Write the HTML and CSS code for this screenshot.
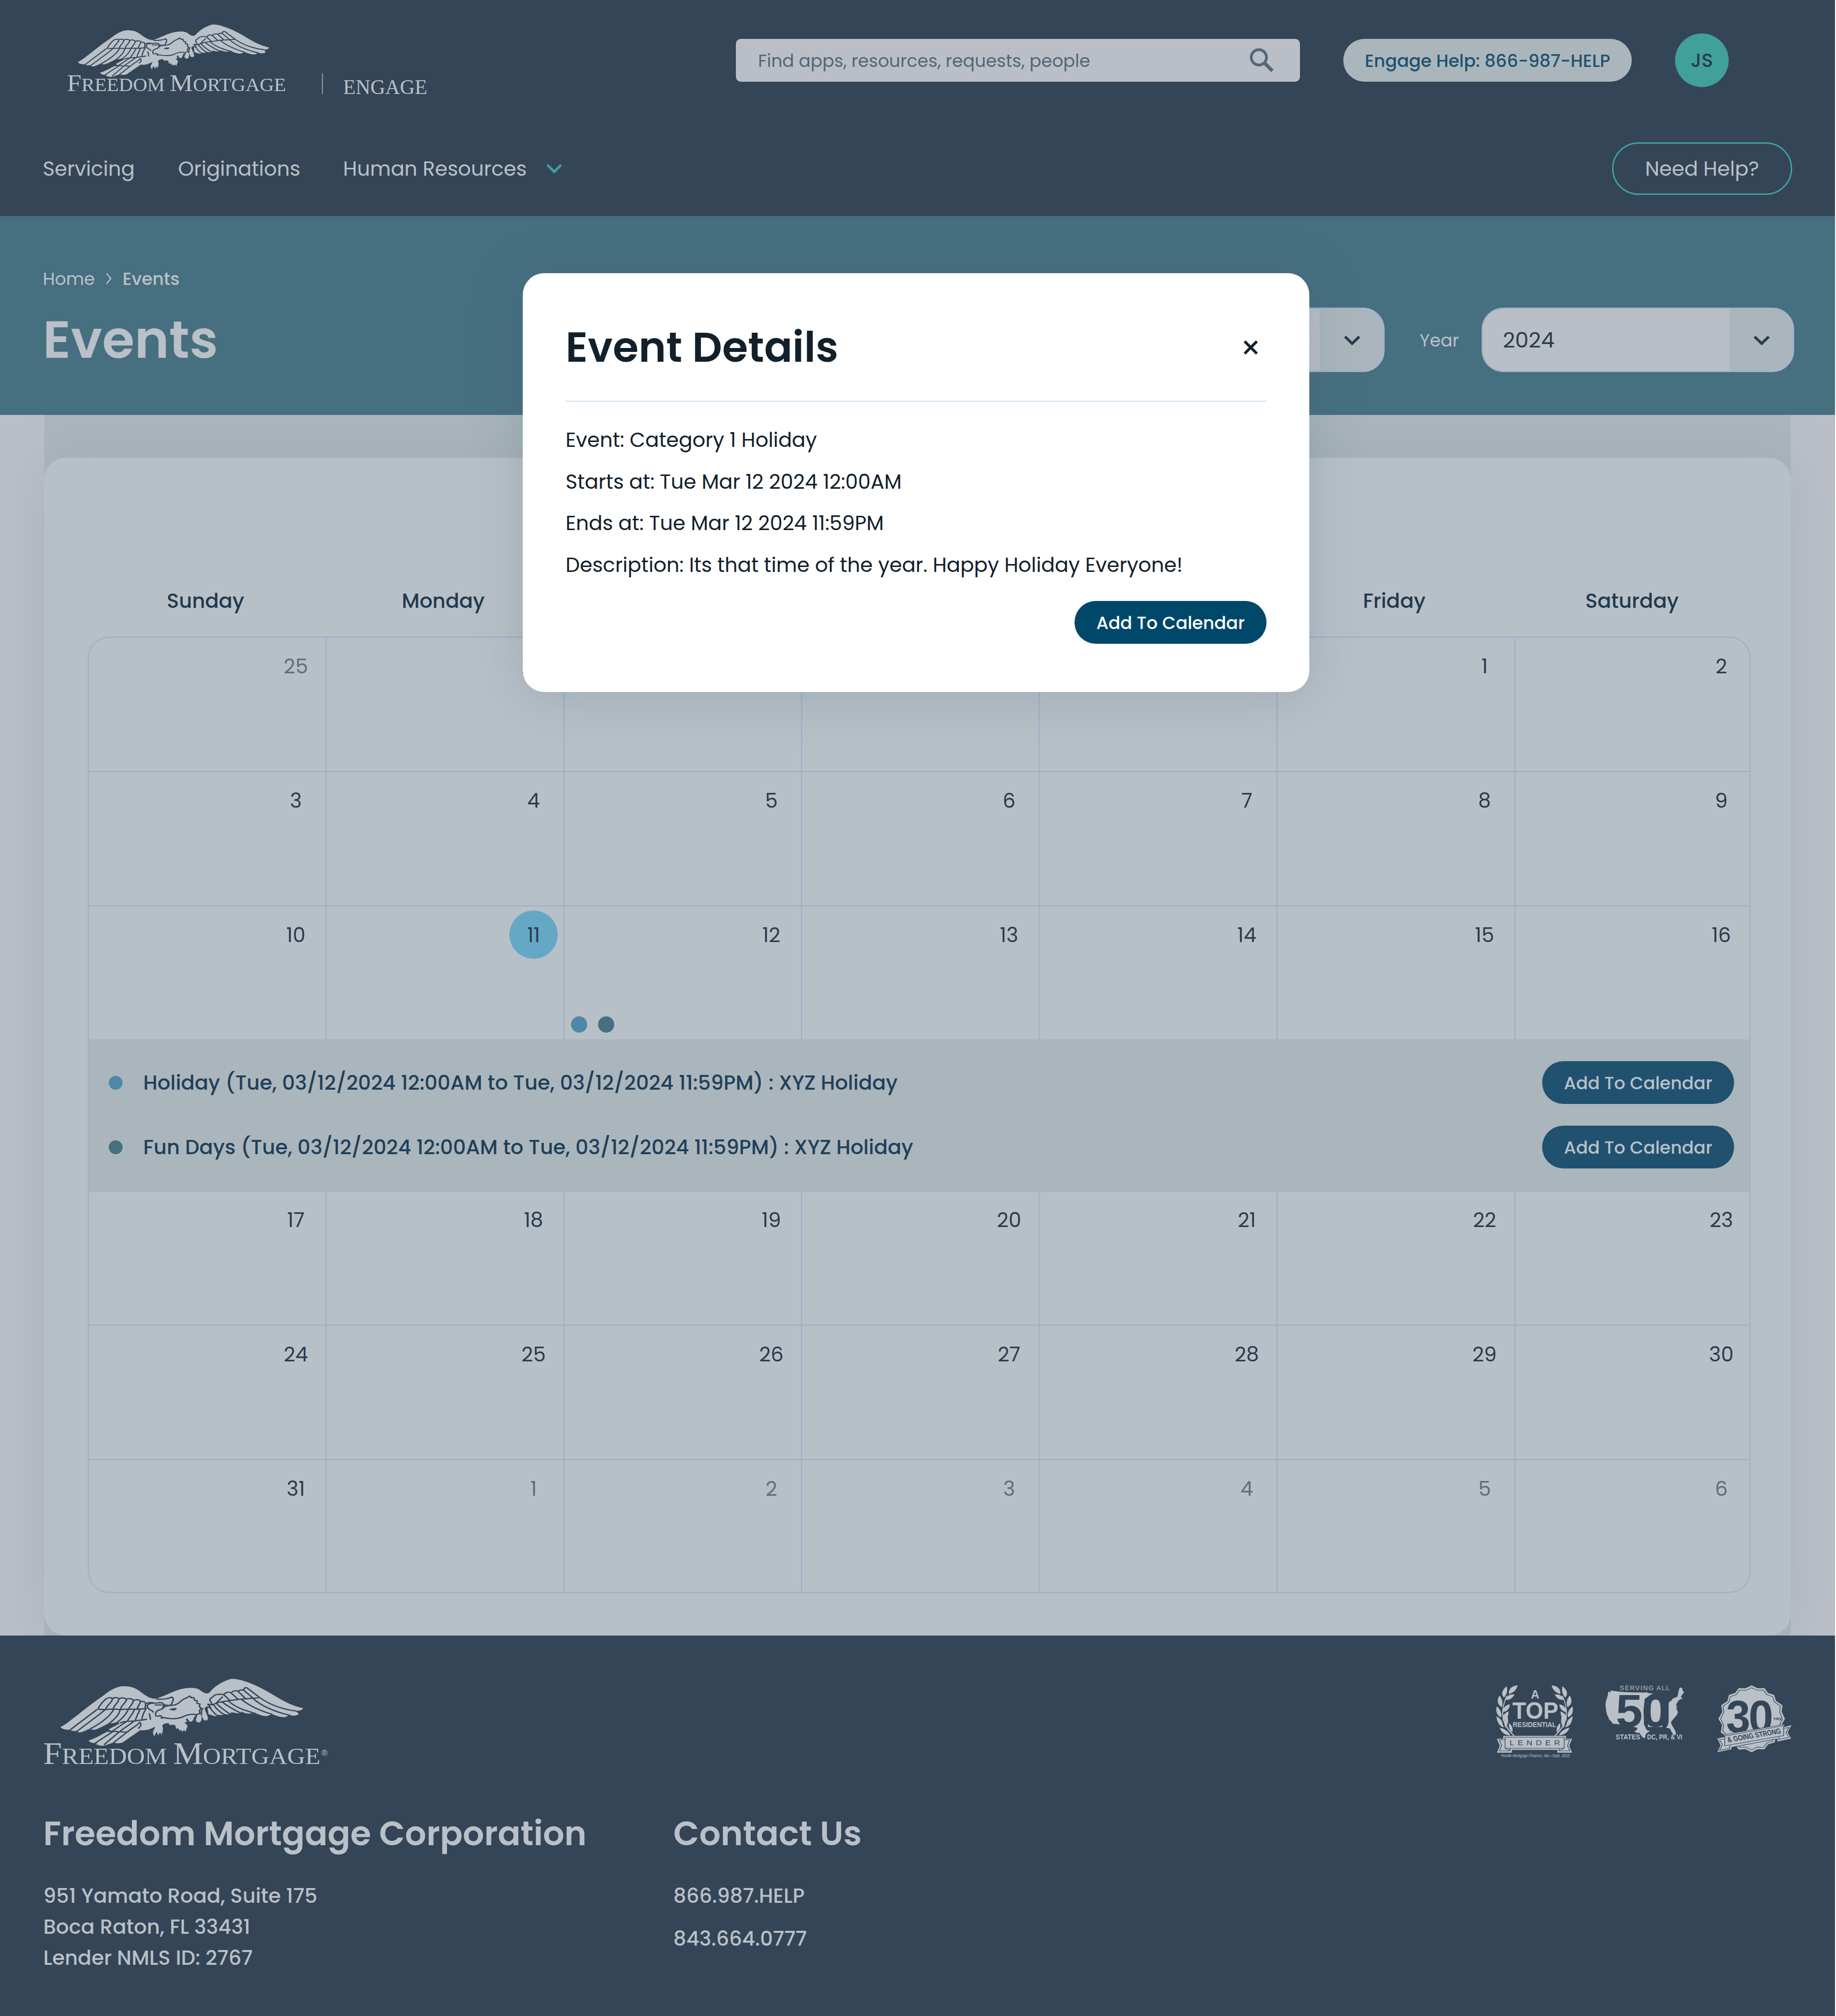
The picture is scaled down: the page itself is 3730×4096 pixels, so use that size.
FILE: index.html
```html
<!DOCTYPE html>
<html lang="en">
<head>
    <meta charset="UTF-8">
    <meta name="viewport" content="width=device-width, initial-scale=1.0">
    <title>Events | Freedom Mortgage Engage</title>
    <link rel="stylesheet" href="styles.css">
</head>
<body>
    <!-- Shared eagle mark -->
    <svg class="sprite" aria-hidden="true">
        <symbol id="eagle" viewBox="142 548 1104 362" preserveAspectRatio="none">
            <path fill="#b9c0c7" d="M142 807C170 795 260 700 340 637C385 595 410 590 435 590C480 592 495 610 520 632C545 652 560 658 578 656C620 640 650 618 690 605C720 597 750 595 768 605C780 612 790 625 805 628C815 629 822 622 828 612C850 585 880 565 910 553C925 548 945 551 970 560C1030 580 1080 615 1130 650C1165 675 1200 695 1245 707C1243 718 1230 722 1212 721L1226 738C1215 749 1200 749 1183 743L1168 753C1150 758 1130 750 1103 738L1088 747C1070 753 1050 744 1028 733L1008 735C995 738 975 732 964 725L962 734C950 737 935 732 918 728L916 737C905 742 895 740 885 736L890 740C880 745 870 744 858 742L856 749C845 752 832 745 812 737L810 700L796 706C803 730 812 750 813 762C811 774 800 778 791 766L783 742C785 765 783 778 775 783C766 784 758 778 757 769L765 742L752 750L744 772C738 782 730 780 727 775L718 762L716 780L704 786C722 792 722 808 714 818L711 833L703 822L697 833L690 822L683 828L680 816L666 815C668 805 664 795 655 795L640 797L630 790L618 792L604 800C612 815 604 825 608 838L602 835L604 852L594 836L586 853L580 832L568 856L563 842C560 828 572 818 572 806C550 820 530 828 505 824L425 889C415 895 395 895 383 890L350 903C335 910 318 907 303 898L310 890L298 893C285 893 275 888 269 879C300 870 330 845 360 830L382 828C372 828 364 826 362 819C385 805 400 795 412 788L398 780C385 786 372 790 362 787C340 800 310 820 296 822C287 822 278 820 274 817C265 820 245 836 228 836C220 835 217 832 218 828C208 829 190 829 184 822C170 822 148 820 142 807Z"/>
            <g fill="none" stroke="#344557" stroke-width="6.5" stroke-linejoin="round">
                <path d="M312 712C320 690 340 665 350 657C362 647 378 650 378 658C385 648 400 648 408 657C415 650 435 650 442 660C450 652 468 655 474 666C485 660 502 660 506 672C515 668 525 672 530 682C545 676 560 676 566 680"/>
                <path d="M310 712C340 718 370 708 410 714C450 710 500 716 535 708"/>
                <path d="M378 658C375 680 352 690 348 711M408 657C405 680 385 690 382 710M442 660C440 680 418 690 415 712M474 666C470 690 455 695 452 712M506 672C500 690 492 700 490 712M530 682L526 708"/>
                <path d="M308 714L184 824M345 715C310 750 250 800 217 830M384 713C370 745 330 785 276 818M413 714C412 740 380 775 362 790M450 714C440 740 420 765 400 782M478 714C470 740 452 760 446 776M503 712C496 735 488 750 482 772M530 712C520 730 515 745 512 766"/>
                <path d="M412 786C430 775 450 778 480 775C500 770 515 772 535 765M440 780L378 829M475 778L412 830M500 785C490 800 470 810 445 834M358 829C370 836 395 826 405 834C420 828 440 840 450 832M378 833L300 893M408 834L340 902M445 834L382 892M500 780C515 795 505 805 495 815"/>
                <path d="M566 680C540 680 530 695 540 705C545 720 560 715 565 730M566 680C580 682 600 672 608 682C616 690 610 700 606 708M545 735C550 745 548 760 552 768M570 690C590 690 600 690 606 690"/>
                <path d="M578 658C605 662 635 655 648 648C662 655 650 675 645 690C635 695 620 690 610 688"/>
                <path d="M578 752C565 725 590 715 604 712C615 690 640 695 660 690C675 688 685 672 700 660C715 652 722 650 730 642L738 652L748 650L752 665L764 668L762 680L776 685L774 700L782 706L774 720L776 735L760 742C735 735 715 742 695 755C665 768 635 762 612 757L600 760C608 750 595 742 582 752"/>
                <path d="M790 706C785 712 782 725 783 745M812 735L806 700L825 705L812 685L832 690"/>
                <path d="M832 690C830 675 815 665 824 655C835 650 840 632 855 634C865 632 880 632 885 636C890 622 910 618 918 626C925 612 945 612 950 618C955 608 972 608 976 612C974 598 985 595 992 600L1050 652"/>
                <path d="M832 690C860 670 900 670 950 660C990 655 1020 655 1050 650M885 636L915 668M918 626L950 660M950 618L985 657M976 612L1018 654M850 680L880 645"/>
                <path d="M1050 652C1090 685 1150 715 1215 722M1018 655C1050 690 1110 725 1186 745M965 660C1000 695 1050 720 1105 740M905 668C940 705 980 718 1030 736M875 672C900 695 930 715 966 736M850 680C870 705 895 725 918 742M838 688C850 712 870 730 892 746M820 700C830 720 842 735 858 750"/>
            </g>
            <path fill="#344557" d="M635 716C645 706 660 706 670 708C670 715 664 719 655 719C648 717 642 718 635 716ZM612 790L632 786L640 797L624 800L630 815L618 808L604 802ZM712 765L722 762L722 778L716 776Z"/>
        </symbol>
    </svg>

    <!-- Header -->
    <header class="header">
        <div class="header-top">
            <svg class="logo" width="446" height="144" viewBox="0 0 446 144">
                <use href="#eagle" x="22" y="0" width="389" height="108"/>
                <text class="logo-text" y="136" textLength="445" lengthAdjust="spacingAndGlyphs"><tspan font-size="49">F</tspan>REEDOM <tspan font-size="49">M</tspan>ORTGAGE</text>
            </svg>
            <span class="logo-divider"></span>
            <svg class="product" width="172" height="44" viewBox="0 0 172 44">
                <text class="product-text" y="36" textLength="171" lengthAdjust="spacingAndGlyphs">ENGAGE</text>
            </svg>
            <div class="search">
                <span class="search-text">Find apps, resources, requests, people</span>
                <svg width="50" height="50" viewBox="0 0 50 50" fill="none" stroke="#536675">
                    <circle cx="18.5" cy="18.5" r="15.5" stroke-width="5.5"/>
                    <path d="M30 30L46 46" stroke-width="7"/>
                </svg>
            </div>
            <a class="help-pill">Engage Help: 866-987-HELP</a>
            <span class="avatar">JS</span>
        </div>
        <nav class="nav">
            <a class="nav-servicing">Servicing</a>
            <a class="nav-orig">Originations</a>
            <a class="nav-hr">Human Resources</a>
            <svg width="34" height="22" viewBox="0 0 34 22" fill="none" stroke="#41a09c" stroke-width="5"><path d="M3 3L17 17L31 3"/></svg>
            <a class="need-help">Need Help?</a>
        </nav>
    </header>

    <!-- Page title -->
    <section class="banner">
        <div class="banner-left">
            <div class="breadcrumb">
                <span class="crumb-home">Home</span>
                <svg width="12" height="24" viewBox="0 0 12 24" fill="none" stroke="#b9c0c7" stroke-width="2.5"><path d="M1.5 1.5L10 12L1.5 22.5"/></svg>
                <span class="crumb-current">Events</span>
            </div>
            <h1>Events</h1>
        </div>
        <div class="filters">
            <div class="select">
                <span class="select-value"></span>
                <span class="select-arrow"><svg width="34" height="22" viewBox="0 0 34 22" fill="none" stroke="#2a3c4b" stroke-width="5.5"><path d="M2.5 3L17 17L31.5 3"/></svg></span>
            </div>
            <span class="filter-label">Year</span>
            <div class="select">
                <span class="select-value">2024</span>
                <span class="select-arrow"><svg width="34" height="22" viewBox="0 0 34 22" fill="none" stroke="#2a3c4b" stroke-width="5.5"><path d="M2.5 3L17 17L31.5 3"/></svg></span>
            </div>
        </div>
    </section>

    <!-- Calendar -->
    <main class="content">
        <div class="panel">
            <div class="card">
                <div class="weekdays">
                    <span>Sunday</span>
                    <span>Monday</span>
                    <span></span>
                    <span></span>
                    <span></span>
                    <span>Friday</span>
                    <span>Saturday</span>
                </div>
                <div class="calendar">
                    <div class="day muted"><span>25</span></div>
                    <div class="day muted"><span>26</span></div>
                    <div class="day"></div>
                    <div class="day"></div>
                    <div class="day"></div>
                    <div class="day"><span>1</span></div>
                    <div class="day"><span>2</span></div>

                    <div class="day"><span>3</span></div>
                    <div class="day"><span>4</span></div>
                    <div class="day"><span>5</span></div>
                    <div class="day"><span>6</span></div>
                    <div class="day"><span>7</span></div>
                    <div class="day"><span>8</span></div>
                    <div class="day"><span>9</span></div>

                    <div class="day"><span>10</span></div>
                    <div class="day"><span class="today">11</span></div>
                    <div class="day">
                        <span>12</span>
                        <div class="dots"><i class="dot holiday"></i><i class="dot fun"></i></div>
                    </div>
                    <div class="day"><span>13</span></div>
                    <div class="day"><span>14</span></div>
                    <div class="day"><span>15</span></div>
                    <div class="day"><span>16</span></div>

                    <div class="events">
                        <div class="event">
                            <i class="bullet holiday"></i>
                            <p>Holiday (Tue, 03/12/2024 12:00AM to Tue, 03/12/2024 11:59PM) : XYZ Holiday</p>
                            <button class="btn">Add To Calendar</button>
                        </div>
                        <div class="event">
                            <i class="bullet fun"></i>
                            <p>Fun Days (Tue, 03/12/2024 12:00AM to Tue, 03/12/2024 11:59PM) : XYZ Holiday</p>
                            <button class="btn">Add To Calendar</button>
                        </div>
                    </div>

                    <div class="day"><span>17</span></div>
                    <div class="day"><span>18</span></div>
                    <div class="day"><span>19</span></div>
                    <div class="day"><span>20</span></div>
                    <div class="day"><span>21</span></div>
                    <div class="day"><span>22</span></div>
                    <div class="day"><span>23</span></div>

                    <div class="day"><span>24</span></div>
                    <div class="day"><span>25</span></div>
                    <div class="day"><span>26</span></div>
                    <div class="day"><span>27</span></div>
                    <div class="day"><span>28</span></div>
                    <div class="day"><span>29</span></div>
                    <div class="day"><span>30</span></div>

                    <div class="day last"><span>31</span></div>
                    <div class="day last muted"><span>1</span></div>
                    <div class="day last muted"><span>2</span></div>
                    <div class="day last muted"><span>3</span></div>
                    <div class="day last muted"><span>4</span></div>
                    <div class="day last muted"><span>5</span></div>
                    <div class="day last muted"><span>6</span></div>
                </div>
            </div>
        </div>
    </main>

    <!-- Footer -->
    <footer class="footer">
        <div class="footer-top">
            <svg width="582" height="180" viewBox="0 0 582 180">
                <use href="#eagle" x="35" y="0" width="493" height="138"/>
                <text class="logo-text footer-logo" y="174" textLength="563" lengthAdjust="spacingAndGlyphs"><tspan font-size="63">F</tspan>REEDOM <tspan font-size="63">M</tspan>ORTGAGE</text>
                <text class="reg" x="565" y="157">®</text>
            </svg>
            <div class="badges">
                <!-- Top lender -->
                <svg width="158.5" height="148.7" viewBox="85 128 355 446" preserveAspectRatio="none" fill="#b9c0c7">
                    <g id="branch">
                        <path d="M168 440C125 385 95 320 135 195L139 196C100 315 130 380 173 438Z"/>
                        <path d="M186 132C165 133 143 150 147 185C170 175 183 155 186 132Z"/>
                        <path d="M137 138C118 155 108 185 124 206C140 185 140 160 137 138Z"/>
                        <path d="M172 187C152 183 134 195 132 220C152 222 166 205 172 187Z"/>
                        <path d="M104 194C90 220 94 250 114 264C122 240 116 212 104 194Z"/>
                        <path d="M151 248C132 250 118 270 119 295C140 290 150 270 151 248Z"/>
                        <path d="M91 260C86 290 92 318 112 326C116 300 106 275 91 260Z"/>
                        <path d="M145 290C126 300 114 320 119 348C137 340 147 315 145 290Z"/>
                        <path d="M90 320C92 350 100 372 118 380C121 355 108 332 90 320Z"/>
                        <path d="M140 318C124 340 122 365 131 390C144 370 145 345 140 318Z"/>
                        <path d="M94 345C98 370 112 385 124 388C118 365 110 352 94 345Z"/>
                        <path d="M147 362C144 385 150 405 162 418C166 395 160 375 147 362Z"/>
                        <path d="M105 390C112 420 130 435 153 436C145 412 125 395 105 390Z"/>
                    </g>
                    <use href="#branch" transform="translate(527 0) scale(-1 1)"/>
                    <path d="M92 457H121V439H406V457H434L421 500L434 542H367V525H160V542H92L105 500Z"/>
                    <g fill="none" stroke="#344557" stroke-width="3">
                        <rect x="129" y="448" width="269" height="67"/>
                        <path d="M129 463H103L114 500L103 531H152V515M129 515L152 529M398 463H424L413 500L424 531H375V515M398 515L375 529"/>
                    </g>
                    <g font-weight="700">
                        <text x="247" y="213" font-size="73" textLength="38" lengthAdjust="spacingAndGlyphs">A</text>
                        <text x="162" y="335" font-size="145" textLength="209" lengthAdjust="spacingAndGlyphs">TOP</text>
                        <text x="164" y="386" font-size="46" textLength="198" lengthAdjust="spacingAndGlyphs">RESIDENTIAL</text>
                    </g>
                    <text x="150" y="497" font-size="46" letter-spacing="20" textLength="245" lengthAdjust="spacingAndGlyphs" fill="#344557">LENDER</text>
                    <text x="109" y="569" font-size="25" textLength="314" lengthAdjust="spacingAndGlyphs"><tspan font-style="italic">*Inside Mortgage Finance,</tspan> Jan.–Sept. 2023</text>
                </svg>
                <!-- 50 states -->
                <svg width="163" height="113.3" viewBox="583 128 365 340" preserveAspectRatio="none" fill="#b9c0c7">
                    <path d="M599 168L607 176L611 163C660 174 720 176 772 175L774 171L778 178L805 182L790 190L765 215L760 290L762 370L775 405L791 411C775 418 765 430 768 453C752 455 748 430 740 420L728 421L718 410C730 408 732 400 730 390L680 372L640 368L620 366C612 345 600 340 600 325C592 310 590 290 588 265C582 230 600 205 599 168Z"/>
                    <path d="M780 215L845 215V385H780Z"/>
                    <path d="M926 144L936 150L938 166L945 170C940 185 930 195 930 203L938 213C922 215 915 230 908 250L915 275L905 262L917 295C910 320 895 335 885 355C885 375 905 400 907 420C908 435 904 438 899 433C888 425 885 405 880 395L862 390C872 375 874 360 874 340V236L888 223C888 212 900 208 912 203C920 190 916 160 926 144Z"/>
                    <g fill="#344557" font-weight="700">
                        <text x="634" y="383" font-size="278" textLength="122" lengthAdjust="spacingAndGlyphs">5</text>
                        <text x="752" y="383" font-size="278" textLength="126" lengthAdjust="spacingAndGlyphs">0</text>
                    </g>
                    <text x="652" y="162" font-size="41" letter-spacing="5" textLength="230" lengthAdjust="spacingAndGlyphs">SERVING ALL</text>
                    <g font-weight="700" font-size="46">
                        <text x="633" y="462" textLength="112" lengthAdjust="spacingAndGlyphs">STATES</text>
                        <text x="776" y="462" textLength="160" lengthAdjust="spacingAndGlyphs">DC, PR, &amp; VI</text>
                    </g>
                </svg>
                <!-- 30 years -->
                <svg width="154" height="138.3" viewBox="1090 130 345 415" preserveAspectRatio="none" fill="#b9c0c7">
                    <path d="M1250 134L1278 152L1309 150L1325 180L1353 192L1361 228L1391 255L1387 295L1402 337L1386 375L1388 420L1362 450L1355 480L1325 494L1308 524L1278 522L1250 542L1222 522L1192 525L1175 494L1146 480L1140 448L1110 420L1116 375L1099 337L1117 295L1112 255L1140 230L1147 192L1175 180L1192 150L1222 152Z"/>
                    <path fill="none" stroke="#344557" stroke-width="3" d="M1250 148L1276 164L1304 162L1319 190L1346 202L1354 235L1381 260L1378 298L1391 337L1377 378L1380 412L1354 445L1347 472L1319 486L1304 512L1276 510L1250 528L1224 510L1196 512L1181 486L1153 472L1146 445L1119 412L1123 378L1109 337L1124 298L1121 260L1147 236L1154 202L1181 190L1196 162L1224 164Z"/>
                    <g fill="#344557" font-weight="700">
                        <text x="1134" y="421" font-size="278" textLength="110" lengthAdjust="spacingAndGlyphs">3</text>
                        <text x="1237" y="421" font-size="278" textLength="112" lengthAdjust="spacingAndGlyphs">0</text>
                        <text x="1349" y="345" font-size="24" textLength="38" lengthAdjust="spacingAndGlyphs">YRS</text>
                    </g>
                    <path stroke="#344557" stroke-width="3" d="M1092 457L1125 448V434L1400 371V386L1434 374L1416 420L1432 459L1366 478V460L1160 511V524L1092 543L1108 498Z"/>
                    <path fill="none" stroke="#344557" stroke-width="3" d="M1128 442L1396 380V440L1128 502ZM1128 460L1104 466L1118 496L1104 530L1150 518V500M1396 396L1421 390L1406 422L1421 450L1374 463V448"/>
                    <text transform="translate(1143 482) rotate(-13)" font-size="46" font-weight="700" fill="#344557" textLength="250" lengthAdjust="spacingAndGlyphs">&amp; GOING STRONG</text>
                </svg>
            </div>
        </div>
        <div class="footer-cols">
            <div class="company">
                <h2>Freedom Mortgage Corporation</h2>
                <p>951 Yamato Road, Suite 175</p>
                <p>Boca Raton, FL 33431</p>
                <p>Lender NMLS ID: 2767</p>
            </div>
            <div class="contact">
                <h2>Contact Us</h2>
                <p>866.987.HELP</p>
                <p>843.664.0777</p>
            </div>
        </div>
    </footer>

    <!-- Event details modal -->
    <div class="modal">
        <div class="modal-header">
            <h2>Event Details</h2>
            <svg width="30" height="30" viewBox="0 0 30 30" stroke="#12202b" stroke-width="5.5"><path d="M2.5 2.5L27.5 27.5M27.5 2.5L2.5 27.5"/></svg>
        </div>
        <div class="modal-body">
            <p>Event: Category 1 Holiday</p>
            <p>Starts at: Tue Mar 12 2024 12:00AM</p>
            <p>Ends at: Tue Mar 12 2024 11:59PM</p>
            <p>Description: Its that time of the year. Happy Holiday Everyone!</p>
        </div>
        <button class="btn btn-primary">Add To Calendar</button>
    </div>
</body>
</html>
```
FILE: styles.css
```css
* {
    box-sizing: border-box;
}
body {
    font-family: 'Poppins', 'Inter', sans-serif;
    margin: 0;
    padding: 0;
    width: 3728px;
    color: #b9c0c7;
    background-color: #ffffff;
    position: relative;
}
h1, h2, p {
    margin: 0;
}
svg {
    display: block;
    flex: none;
    overflow: visible;
}
svg text {
    font-family: 'Liberation Sans', Arial, sans-serif;
}
.sprite {
    position: absolute;
    width: 0;
    height: 0;
}
/* Header */
.header {
    height: 439px;
    background: #344557;
}
.header-top {
    display: flex;
    align-items: flex-start;
    height: 246px;
    padding-left: 136px;
}
.logo {
    margin-top: 49px;
}
svg .logo-text {
    font-family: 'Liberation Serif', serif;
    font-size: 37px;
    fill: #b9c0c7;
}
svg .footer-logo {
    font-size: 47px;
}
svg .reg {
    font-size: 17px;
    fill: #b9c0c7;
}
.logo-divider {
    width: 2px;
    height: 42px;
    margin: 149px 0 0 72px;
    background: #8f9aa5;
}
.product {
    margin: 155px 0 0 41px;
}
svg .product-text {
    font-family: 'Liberation Serif', serif;
    font-size: 43px;
    fill: #b9c0c7;
}
.search {
    display: flex;
    align-items: center;
    justify-content: space-between;
    width: 1146px;
    height: 87px;
    margin: 79px 0 0 626px;
    padding: 0 52px 0 45px;
    border-radius: 10px;
    background: #babfc7;
    color: #536675;
}
.search-text {
    padding-top: 2px;
    font-size: 35.5px;
}
.help-pill {
    width: 586px;
    height: 87px;
    margin: 79px 0 0 88px;
    border-radius: 44px;
    background: #abb6bc;
    color: #20526f;
    font-size: 35.5px;
    font-weight: 500;
    line-height: 90px;
    text-align: center;
    white-space: nowrap;
}
.avatar {
    width: 109px;
    height: 109px;
    margin: 68px 0 0 88px;
    border-radius: 50%;
    background: #41a09c;
    color: #2a3c4b;
    font-size: 39px;
    font-weight: 500;
    line-height: 109px;
    text-align: center;
}
.nav {
    display: flex;
    align-items: center;
    height: 193px;
    padding: 0 87px 0 87px;
    font-size: 41px;
}
.nav-orig {
    margin-left: 88px;
}
.nav-hr {
    margin-left: 87px;
}
.nav svg {
    margin-left: 39px;
}
.need-help {
    width: 366px;
    height: 107px;
    margin-left: auto;
    border: 3px solid #41a09c;
    border-radius: 54px;
    line-height: 102px;
    text-align: center;
}
/* Banner */
.banner {
    display: flex;
    justify-content: space-between;
    height: 404px;
    padding: 0 83px 0 87px;
    background: #466f80;
}
.breadcrumb {
    display: flex;
    align-items: center;
    height: 40px;
    margin-top: 107px;
    font-size: 35.5px;
}
.breadcrumb svg {
    margin: 0 22px;
}
.crumb-current {
    font-weight: 500;
}
.banner h1 {
    margin-top: 41px;
    font-size: 106.5px;
    font-weight: 600;
    line-height: 126px;
}
.filters {
    display: flex;
    align-items: center;
    height: 131px;
    margin-top: 186px;
}
.filter-label {
    width: 197px;
    padding: 2px 0 0 71px;
    font-size: 35.5px;
}
.select {
    display: flex;
    width: 635px;
    height: 131px;
    border: 3px solid #a2b3c8;
    border-radius: 44px;
    background: #babfc7;
    overflow: hidden;
}
.select-value {
    flex: 1;
    padding-left: 40px;
    color: #2a3c4b;
    font-size: 43.7px;
    line-height: 126px;
}
.select-arrow {
    display: flex;
    align-items: center;
    justify-content: center;
    width: 129px;
    padding: 2px 0 0 3px;
    background: #abb6bc;
}
/* Calendar */
.content {
    height: 2480px;
    padding: 0 90px;
    background: #babfc7;
    overflow: hidden;
}
.panel {
    height: 2480px;
    padding-top: 87px;
    background: #abb6bc;
}
.card {
    height: 2393px;
    padding: 260px 81px 0 88px;
    border-radius: 44px;
    background: #b8c0c7;
    box-shadow: 0 0 110px rgba(120, 135, 155, 0.24);
}
.weekdays {
    display: grid;
    grid-template-columns: repeat(7, 483px);
    height: 103px;
    margin: 0 -8px 0 -2px;
    color: #223a4d;
    font-size: 41px;
    font-weight: 500;
    line-height: 62px;
    text-align: center;
}
.calendar {
    display: grid;
    grid-template-columns: repeat(6, 483px) 1fr;
    grid-template-rows: repeat(3, 273px) 306px repeat(2, 273px) 267px;
    border: 3px solid #a2b3c8;
    border-radius: 44px;
    overflow: hidden;
}
.day {
    display: flex;
    flex-direction: column;
    justify-content: space-between;
    padding: 8px 11px 14px;
    border-right: 3px solid #a2b3c8;
    border-bottom: 3px solid #a2b3c8;
    color: #2a3c4b;
    font-size: 41px;
}
.day > span {
    align-self: flex-end;
    width: 98px;
    height: 98px;
    border-radius: 50%;
    line-height: 99px;
    text-align: center;
}
.day:nth-child(7), .day:nth-child(14), .day:nth-child(21),
.day:nth-child(29), .day:nth-child(36), .day:nth-child(43) {
    padding-right: 8px;
    border-right: none;
}
.day.last {
    border-bottom: none;
}
.day.muted {
    color: #5f6f7d;
}
.day .today {
    background: #64a8c6;
}
.dots {
    display: flex;
    gap: 22px;
    padding-left: 2px;
}
.dot {
    width: 33px;
    height: 33px;
    border-radius: 50%;
}
.holiday {
    background: #4e87a8;
}
.fun {
    background: #466f80;
}
.events {
    grid-column: 1 / -1;
    padding: 41px 31px 0 40px;
    border-bottom: 3px solid #a2b3c8;
    background: #abb6bc;
}
.event {
    display: flex;
    align-items: center;
    height: 87px;
    margin-bottom: 44px;
    color: #20405a;
}
.bullet {
    width: 28px;
    height: 28px;
    margin-right: 42px;
    border-radius: 50%;
}
.event p {
    font-size: 41px;
    font-weight: 500;
    white-space: nowrap;
}
.btn {
    width: 390px;
    height: 87px;
    margin-left: auto;
    padding: 2px 0 0;
    border: none;
    border-radius: 44px;
    background: #20526f;
    color: #b9c0c7;
    font-family: inherit;
    font-size: 35.5px;
    font-weight: 500;
    cursor: pointer;
}
/* Footer */
.footer {
    height: 773px;
    padding: 87px 87px 0 88px;
    background: #344557;
}
.footer-top {
    display: flex;
    justify-content: space-between;
}
.badges {
    display: flex;
    gap: 63.6px;
    padding-top: 13px;
}
.footer-cols {
    display: flex;
    padding-top: 75px;
}
.company {
    width: 1280px;
}
.footer h2 {
    height: 155px;
    font-size: 68.3px;
    font-weight: 600;
    line-height: 120px;
    white-space: nowrap;
}
.footer p {
    height: 63px;
    font-size: 41px;
    font-weight: 500;
    line-height: 63px;
}
.contact p {
    margin-bottom: 24px;
}
/* Modal */
.modal {
    position: absolute;
    top: 555px;
    left: 1062px;
    width: 1598px;
    height: 851px;
    padding: 88px 87px 0;
    border-radius: 44px;
    background: #ffffff;
    box-shadow: 0 10px 110px rgba(70, 95, 120, 0.22);
    color: #12202b;
}
.modal-header {
    display: flex;
    align-items: center;
    justify-content: space-between;
    height: 174px;
    padding: 0 17px 45px 0;
    border-bottom: 3px solid #d9e8f8;
}
.modal-header h2 {
    font-size: 84.8px;
    font-weight: 600;
    line-height: 126px;
}
.modal-body {
    margin: 35px 0 30px;
    font-size: 41px;
    line-height: 84.7px;
}
.btn-primary {
    display: block;
    background: #00486a;
    color: #ffffff;
}
```
